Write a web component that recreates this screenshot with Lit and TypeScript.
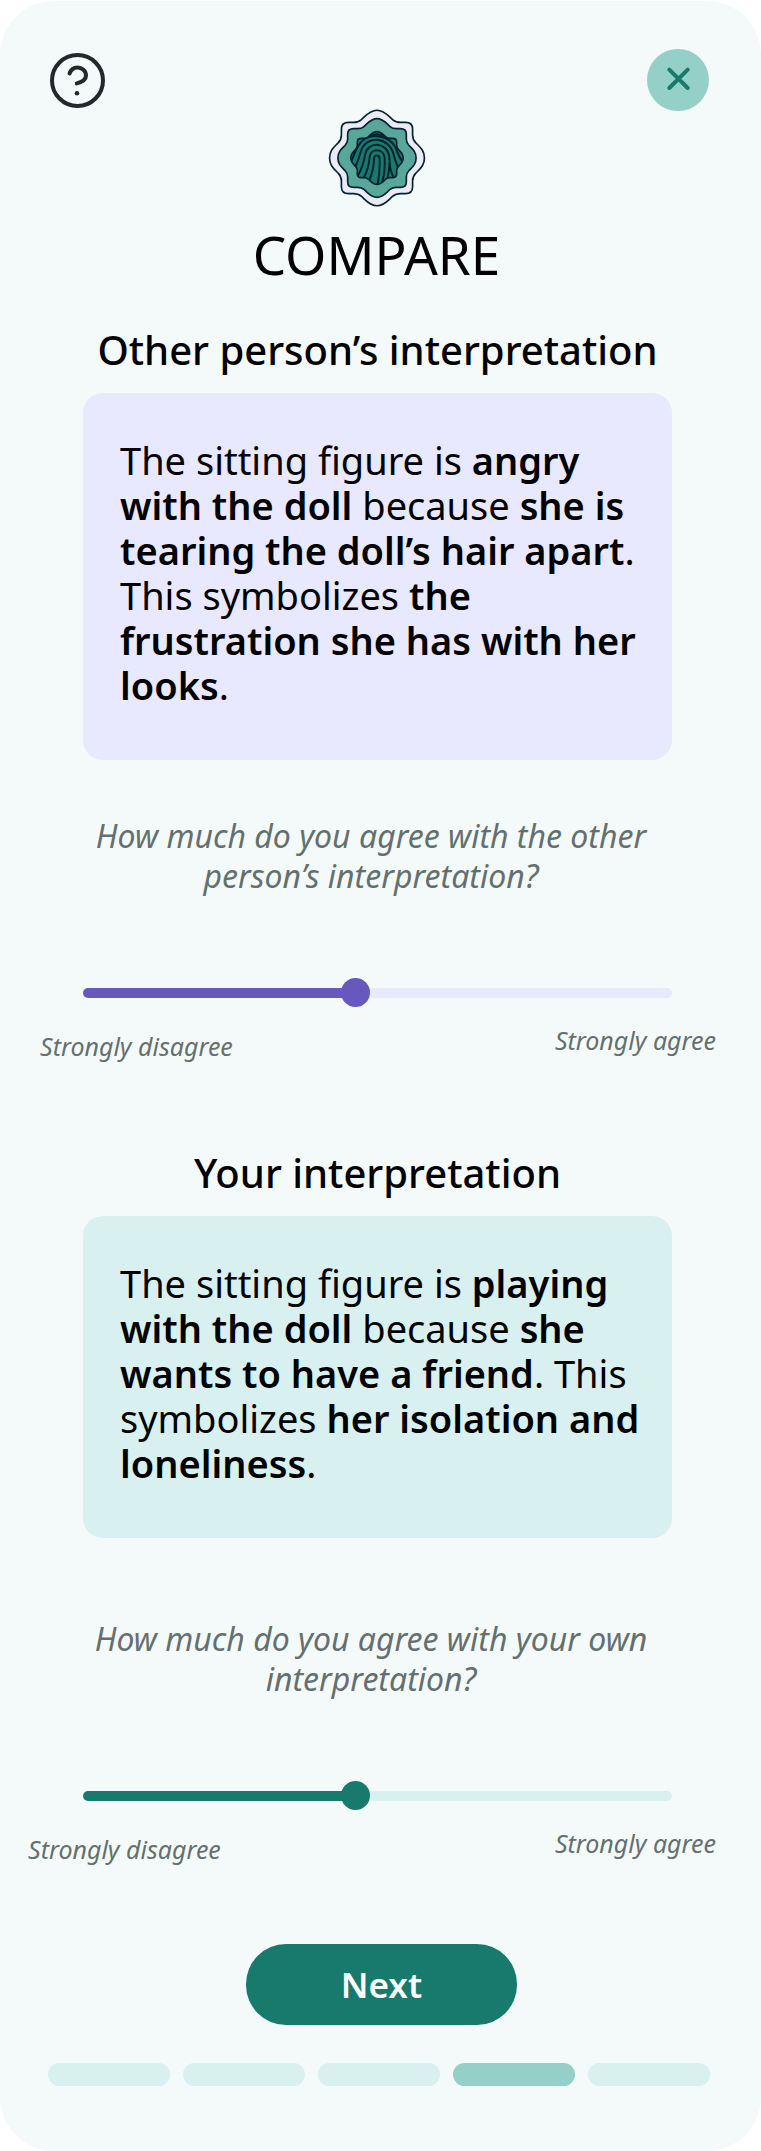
import { LitElement, html, css, svg } from "lit";
import { customElement, property } from "lit/decorators.js";

/* One quadrant of the eight-lobed badge, mirrored around to close the shape. */
function lobedPath(scale: number): string {
  const quadrant: number[][] = [
    [0, -145], [-22, -145], [-34, -128], [-48, -116],
    [-56, -109], [-62, -108], [-72, -108],
    [-77, -108], [-81, -108], [-86, -108],
    [-101, -108], [-108, -101], [-108, -88],
    [-108, -82], [-108, -76], [-108, -70],
    [-108, -60], [-110, -54], [-118, -46],
    [-132, -32], [-144, -22], [-144, 0],
  ];
  const back = [...quadrant].reverse();
  const flip = (pts: number[][], sx: number, sy: number) =>
    pts.map(([x, y]) => [x * sx, y * sy]);
  const points = [
    ...quadrant,
    ...flip(back, 1, -1).slice(1),
    ...flip(quadrant, -1, -1).slice(1),
    ...flip(back, -1, 1).slice(1),
  ].map(([x, y]) => `${(x * scale).toFixed(1)},${(y * scale).toFixed(1)}`);
  return `M${points[0]}C${points.slice(1).join(" ")}Z`;
}

const RIDGES = [
  "M-24,70 C-12,40 -9,15 -9,2 C-9,-11 8,-11 8,2 C9,30 9,45 2,80",
  "M-42,64 C-26,35 -23,10 -22,-4 C-19,-30 19,-30 23,-2 C25,30 23,50 15,74",
  "M-58,54 C-42,25 -38,5 -36,-10 C-29,-51 30,-50 37,-5 C41,22 36,40 30,68",
  "M-66,28 C-55,4 -52,-10 -48,-22 C-32,-69 34,-66 50,-12 C54,8 62,26 72,46",
  "M-76,6 C-66,-16 -60,-42 -40,-56 C-10,-76 38,-66 56,-32 C62,-14 68,0 80,16",
  "M38,16 C40,36 44,50 54,64",
  "M-30,-62 C-10,-74 12,-74 30,-62",
];

@customElement("compare-badge")
export class CompareBadge extends LitElement {
  static styles = css`
    :host { display: block; width: 98px; height: 98px; }
    svg { display: block; width: 100%; height: 100%; }
    .line { stroke: #02232f; stroke-width: 5; stroke-linejoin: round; }
    .outer { fill: #ecebf5; }
    .middle { fill: #58a79a; }
    .inner { fill: #177a6d; }
    .ridge { fill: none; stroke: #02232f; stroke-width: 6; stroke-linecap: round; }
  `;

  render() {
    return html`
      <svg viewBox="-148 -148 296 296" aria-hidden="true">
        <defs><clipPath id="core"><path d=${lobedPath(0.55)} /></clipPath></defs>
        <path class="line outer" d=${lobedPath(0.995)} />
        <path class="line middle" d=${lobedPath(0.82)} />
        <path class="inner" d=${lobedPath(0.55)} />
        <g clip-path="url(#core)">${RIDGES.map((d) => svg`<path class="ridge" d=${d} />`)}</g>
        <path class="line" fill="none" d=${lobedPath(0.55)} />
      </svg>
    `;
  }
}

@customElement("agreement-scale")
export class AgreementScale extends LitElement {
  @property() question = "";
  @property({ type: Number }) value = 46;

  static styles = css`
    :host { display: block; }
    .question {
      display: block;
      max-width: 580px;
      margin: 0 auto;
      padding: 0 102px 0 83px;
      font-size: 32px;
      line-height: 40px;
      font-style: italic;
      text-align: center;
      color: #64706f;
    }
    .track { padding: 82px 89px 0 83px; }
    input {
      display: block;
      width: 100%;
      height: 29px;
      margin: 0;
      appearance: none;
      background: none;
      cursor: pointer;
    }
    input::-webkit-slider-runnable-track {
      height: 10px;
      border-radius: 5px;
      background: linear-gradient(
        to right,
        var(--accent) var(--filled),
        var(--rail) var(--filled)
      );
    }
    input::-webkit-slider-thumb {
      appearance: none;
      width: 29px;
      height: 29px;
      margin-top: -10px;
      border-radius: 50%;
      background: var(--accent);
    }
    .ends {
      display: flex;
      justify-content: space-between;
      padding: 18px 45px 0 var(--ends-inset, 40px);
      font-size: 25px;
      line-height: 30px;
      font-style: italic;
      color: #64706f;
    }
    .low { padding-top: 6px; }
  `;

  private onInput(e: Event) {
    this.value = Number((e.target as HTMLInputElement).value);
  }

  render() {
    return html`
      <label class="question" for="scale">${this.question}</label>
      <div class="track">
        <input
          id="scale"
          type="range"
          min="0"
          max="100"
          .value=${String(this.value)}
          style="--filled: ${this.value}%"
          @input=${this.onInput}
        />
      </div>
      <div class="ends">
        <span class="low">Strongly disagree</span>
        <span>Strongly agree</span>
      </div>
    `;
  }
}

@customElement("app-root")
export class AppRoot extends LitElement {
  static styles = css`
    :host {
      display: block;
      padding-top: 1px;
      background: #fff;
      color: #000;
      font-family: "Noto Sans", "Open Sans", sans-serif;
    }
    .screen {
      display: flex;
      flex-direction: column;
      padding: 48px 0 65px;
      border-radius: 54px;
      background: #f4fafa;
    }
    .bar {
      display: flex;
      justify-content: space-between;
      height: 60px;
      padding: 0 52px 0 46px;
    }
    .round {
      display: grid;
      place-items: center;
      width: 62px;
      height: 62px;
      padding: 0;
      border: 0;
      border-radius: 50%;
      background: none;
      cursor: pointer;
    }
    .close { background: #95d0c8; }
    .glyph { fill: none; stroke-width: 4; stroke-linecap: round; }
    .help .glyph { stroke: #23292b; }
    .close .glyph { stroke: #177a6d; }
    .dot { fill: #23292b; stroke: none; }
    .intro {
      display: flex;
      flex-direction: column;
      align-items: center;
      gap: 18px;
      padding: 0 91px 0 83px;
    }
    h1, h2, p { margin: 0; }
    h1 { font-size: 53px; line-height: 60px; font-weight: 400; }
    h2 {
      font-size: 40px;
      line-height: 50px;
      font-weight: 500;
      text-align: center;
    }
    .reading {
      display: flex;
      flex-direction: column;
      gap: 18px;
      padding: 40px 89px 0 83px;
    }
    .later { padding-top: 87px; }
    .text {
      padding: 45px 24px 52px 37px;
      border-radius: 20px;
      font-size: 38px;
      line-height: 45px;
    }
    strong { font-weight: 600; }
    .lilac { background: #e8e8fe; }
    .mint { background: #d9f0f0; }
    .theirs { --accent: #6658bd; --rail: #e8e8fe; padding-top: 56px; }
    .mine { --accent: #177a6d; --rail: #d9f0f0; --ends-inset: 28px; padding-top: 81px; }
    .next {
      align-self: center;
      width: 271px;
      height: 81px;
      margin: 80px 0 0 2px;
      padding: 0;
      border: 0;
      border-radius: 40px;
      background: #177a6d;
      color: #fff;
      font: 600 35px/40px "Noto Sans", "Open Sans", sans-serif;
      cursor: pointer;
    }
    .steps {
      display: grid;
      grid-template-columns: repeat(5, 1fr);
      gap: 13px;
      margin: 38px 0 0;
      padding: 0 51px 0 48px;
      list-style: none;
    }
    .step { height: 23px; border-radius: 12px; background: #d9f0f0; }
    .current { background: #95d0c8; }
  `;

  render() {
    return html`
      <main class="screen">
        <div class="bar">
          <button class="round help" aria-label="Help">
            <svg class="glyph" width="55" height="55" viewBox="0 0 55 55" aria-hidden="true">
              <circle cx="27.5" cy="27.5" r="25.5" />
              <path d="M19.5 20.5C21 16.5 24 14.5 27.5 14.5C32 14.5 36 18 36 22.5C36 27 31.5 29.2 26.8 30.4" />
              <circle class="dot" cx="27" cy="40.3" r="2.3" />
            </svg>
          </button>
          <button class="round close" aria-label="Close">
            <svg class="glyph" width="62" height="62" viewBox="0 0 62 62" aria-hidden="true">
              <path d="M22.3 20.7L40.7 39M40.7 20.7L22.3 39" />
            </svg>
          </button>
        </div>
        <div class="intro">
          <compare-badge></compare-badge>
          <h1>COMPARE</h1>
        </div>

        <section class="reading">
          <h2>Other person’s interpretation</h2>
          <p class="text lilac">
            The sitting figure is <strong>angry with the doll</strong> because
            <strong>she is tearing the doll’s hair apart</strong>. This symbolizes
            <strong>the frustration she has with her looks</strong>.
          </p>
        </section>
        <agreement-scale
          class="theirs"
          question="How much do you agree with the other person’s interpretation?"
        ></agreement-scale>

        <section class="reading later">
          <h2>Your interpretation</h2>
          <p class="text mint">
            The sitting figure is <strong>playing with the doll</strong> because
            <strong>she wants to have a friend</strong>. This symbolizes
            <strong>her isolation and loneliness</strong>.
          </p>
        </section>
        <agreement-scale
          class="mine"
          question="How much do you agree with your own interpretation?"
        ></agreement-scale>

        <button class="next">Next</button>
        <ol class="steps" aria-label="Step 4 of 5">
          ${[1, 2, 3, 4, 5].map(
            (n) => html`<li class="step ${n === 4 ? "current" : ""}"></li>`
          )}
        </ol>
      </main>
    `;
  }
}
